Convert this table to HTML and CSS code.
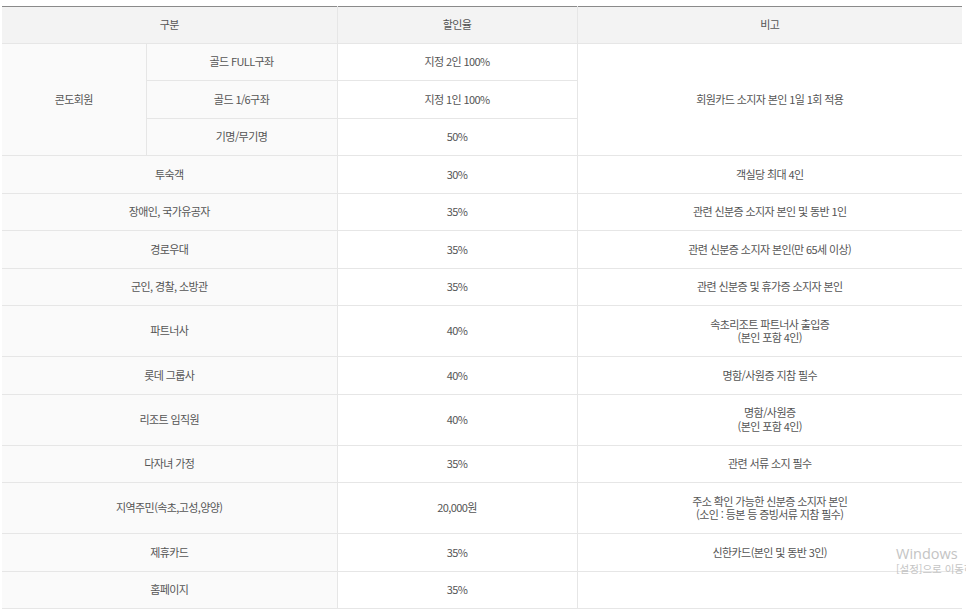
FILE: index.html
```html
<!DOCTYPE html>
<html lang="ko">
<head>
<meta charset="utf-8">
<title>할인율</title>
<link rel="stylesheet" href="styles.css">
</head>
<body>
<div class="wrap">
<table class="rate">
  <colgroup>
    <col class="c1"><col class="c2"><col class="c3"><col class="c4">
  </colgroup>
  <thead>
    <tr><th colspan="2">구분</th><th>할인율</th><th>비고</th></tr>
  </thead>
  <tbody>
    <tr><td class="lab" rowspan="3">콘도회원</td><td class="lab">골드 FULL구좌</td><td>지정 2인 100%</td><td rowspan="3">회원카드 소지자 본인 1일 1회 적용</td></tr>
    <tr><td class="lab">골드 1/6구좌</td><td>지정 1인 100%</td></tr>
    <tr><td class="lab">기명/무기명</td><td>50%</td></tr>
    <tr><td class="lab" colspan="2">투숙객</td><td>30%</td><td>객실당 최대 4인</td></tr>
    <tr><td class="lab" colspan="2">장애인, 국가유공자</td><td>35%</td><td>관련 신분증 소지자 본인 및 동반 1인</td></tr>
    <tr><td class="lab" colspan="2">경로우대</td><td>35%</td><td>관련 신분증 소지자 본인(만 65세 이상)</td></tr>
    <tr><td class="lab" colspan="2">군인, 경찰, 소방관</td><td>35%</td><td>관련 신분증 및 휴가증 소지자 본인</td></tr>
    <tr><td class="lab" colspan="2">파트너사</td><td>40%</td><td>속초리조트 파트너사 출입증<br>(본인 포함 4인)</td></tr>
    <tr><td class="lab" colspan="2">롯데 그룹사</td><td>40%</td><td>명함/사원증 지참 필수</td></tr>
    <tr><td class="lab" colspan="2">리조트 임직원</td><td>40%</td><td>명함/사원증<br>(본인 포함 4인)</td></tr>
    <tr><td class="lab" colspan="2">다자녀 가정</td><td>35%</td><td>관련 서류 소지 필수</td></tr>
    <tr><td class="lab" colspan="2">지역주민(속초,고성,양양)</td><td>20,000원</td><td>주소 확인 가능한 신분증 소지자 본인<br>(소인 : 등본 등 증빙서류 지참 필수)</td></tr>
    <tr><td class="lab" colspan="2">제휴카드</td><td>35%</td><td>신한카드(본인 및 동반 3인)</td></tr>
    <tr><td class="lab" colspan="2">홈페이지</td><td>35%</td><td></td></tr>
  </tbody>
</table>
</div>
<div class="winmark">
  <div class="wm1">Windows</div>
  <div class="wm2">[설정]으로 이동하여 Windows를 정품 인증합니다.</div>
</div>
</body>
</html>
```

FILE: styles.css
```css
html, body {
  margin: 0;
  padding: 0;
  background: #ffffff;
  overflow: hidden;
}
body {
  font-family: "Noto Sans CJK KR", "Noto Sans", sans-serif;
  color: #555555;
}
.wrap {
  padding: 6px 0 0 2px;
}
.rate {
  width: 960px;
  border-collapse: collapse;
  table-layout: fixed;
  border-top: 1px solid #8a8a8a;
  border-bottom: 1px solid #8a8a8a;
  font-size: 11px;
  letter-spacing: -0.6px;
}
.c1 { width: 144px; }
.c2 { width: 191px; }
.c3 { width: 240px; }
.c4 { width: 385px; }
.rate th,
.rate td {
  padding: 11.5px 4px;
  line-height: 13.5px;
  text-align: center;
  vertical-align: middle;
  font-weight: normal;
  border: 1px solid #e6e6e6;
}
.rate tr > :first-child { border-left: none; }
.rate tr > :last-child { border-right: none; }
.rate thead th {
  background: #f3f3f3;
  border-top: none;
  padding-top: 11px;
  padding-bottom: 11px;
}
.rate td.lab {
  background: #fafafa;
}
.rate td.lab[rowspan] { border-left: none; }
.winmark {
  position: absolute;
  left: 896px;
  top: 545px;
  white-space: nowrap;
  color: #c4c4c4;
  font-family: "Open Sans", "Noto Sans", sans-serif;
}
.wm1 {
  font-size: 14.5px;
  line-height: 18px;
}
.wm2 {
  font-family: "Noto Sans CJK KR", sans-serif;
  font-size: 10.5px;
  line-height: 12px;
}
```
